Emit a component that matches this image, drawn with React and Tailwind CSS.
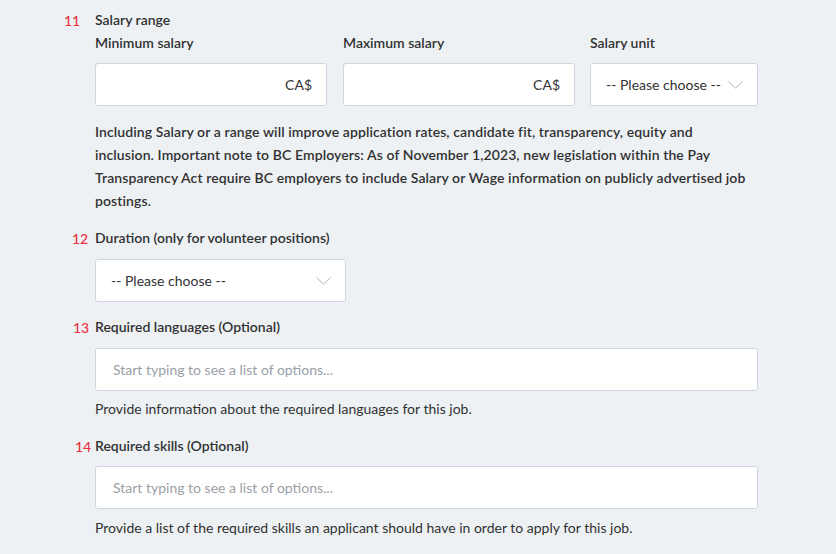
import React from "react";

const Chevron = () => (
  <svg width="15" height="8" viewBox="0 0 15 8" fill="none" className="shrink-0">
    <path d="M0.5 0.5 L7.5 7 L14.5 0.5" stroke="#aeb4bb" strokeWidth="1" />
  </svg>
);

const Num = ({ n, offset }) => (
  <div className="w-[95px] shrink-0 text-[14px] leading-5 font-medium text-[#e8303e] pt-[1px]">
    <span className={offset}>{n}</span>
  </div>
);

const Label = ({ children }) => (
  <div className="text-[14px] leading-5 font-semibold">{children}</div>
);

const MoneyInput = () => (
  <div className="h-[43px] bg-white border border-[#cfd6df] rounded-[3px] flex items-center justify-end pr-[14px] text-[14px]">
    CA$
  </div>
);

const Select = ({ className = "" }) => (
  <div
    className={`h-[43px] bg-white border border-[#cfd6df] rounded-[3px] flex items-center justify-between pl-[15px] pr-[14px] text-[14px] ${className}`}
  >
    <span>-- Please choose --</span>
    <Chevron />
  </div>
);

const TextInput = () => (
  <div className="h-[43px] bg-white border border-[#cfd6df] rounded-[3px] flex items-center pl-[17px] text-[14px] text-[#9aa0a8]">
    Start typing to see a list of options...
  </div>
);

export default function App() {
  return (
    <div className="min-h-screen bg-[#eef1f4] text-[#313132] font-['Lato',sans-serif] pt-[10px]">
      {/* 11 */}
      <div className="flex">
        <Num n="11" offset="ml-[64px]" />
        <div className="w-[663px]">
          <Label>Salary range</Label>
          <div className="flex mt-[3px]">
            <div className="w-[232px]">
              <Label>Minimum salary</Label>
              <div className="mt-[10px]">
                <MoneyInput />
              </div>
            </div>
            <div className="w-[232px] ml-[16px]">
              <Label>Maximum salary</Label>
              <div className="mt-[10px]">
                <MoneyInput />
              </div>
            </div>
            <div className="w-[168px] ml-[15px]">
              <Label>Salary unit</Label>
              <div className="mt-[10px]">
                <Select />
              </div>
            </div>
          </div>
          <p className="mt-[14px] text-[14px] leading-[23px] font-semibold tracking-[0.1px]">
            <span className="block">
              Including Salary or a range will improve application rates, candidate fit, transparency, equity and
            </span>
            <span className="block">
              inclusion. Important note to BC Employers: As of November 1,2023, new legislation within the Pay
            </span>
            <span className="block">
              Transparency Act require BC employers to include Salary or Wage information on publicly advertised job
            </span>
            <span className="block">postings.</span>
          </p>
        </div>
      </div>

      {/* 12 */}
      <div className="flex mt-[16px]">
        <Num n="12" offset="ml-[72px]" />
        <div className="w-[663px]">
          <Label>Duration (only for volunteer positions)</Label>
          <Select className="w-[251px] mt-[11px]" />
        </div>
      </div>

      {/* 13 */}
      <div className="flex mt-[15px]">
        <Num n="13" offset="ml-[73px]" />
        <div className="w-[663px]">
          <Label>Required languages (Optional)</Label>
          <div className="mt-[11px]">
            <TextInput />
          </div>
          <p className="mt-[8px] text-[14px] leading-5">
            Provide information about the required languages for this job.
          </p>
        </div>
      </div>

      {/* 14 */}
      <div className="flex mt-[17px]">
        <Num n="14" offset="ml-[75px]" />
        <div className="w-[663px]">
          <Label>Required skills (Optional)</Label>
          <div className="mt-[10px]">
            <TextInput />
          </div>
          <p className="mt-[9px] text-[14px] leading-5">
            Provide a list of the required skills an applicant should have in order to apply for this job.
          </p>
        </div>
      </div>
    </div>
  );
}
